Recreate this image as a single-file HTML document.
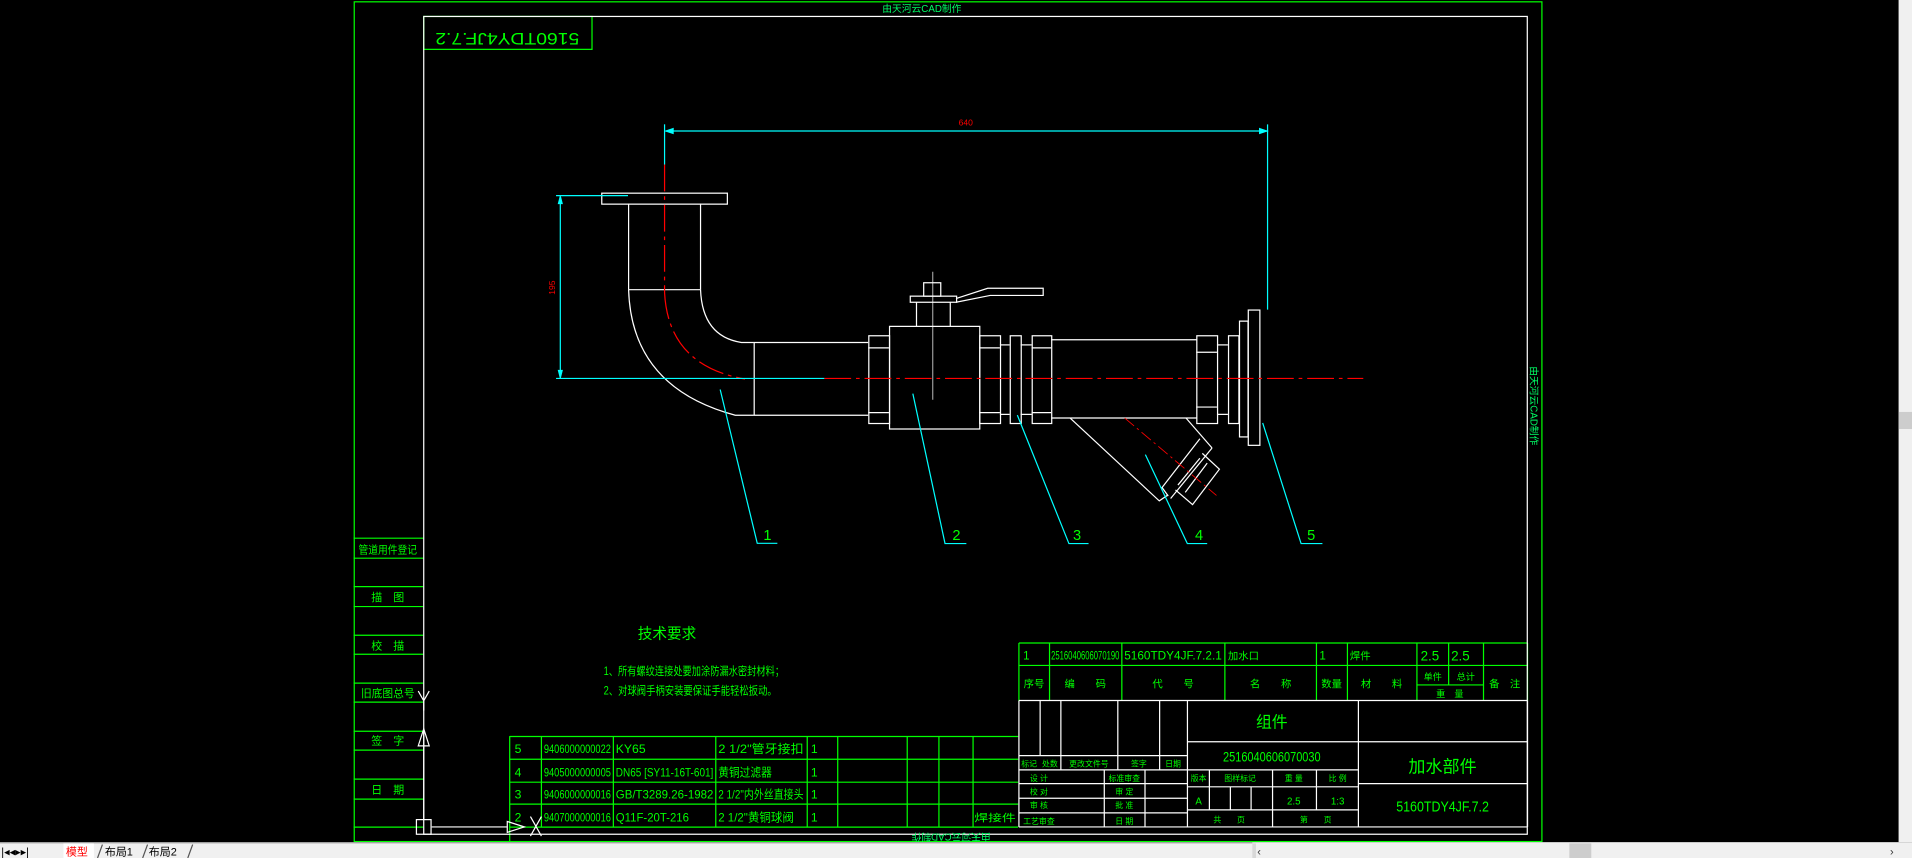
<!DOCTYPE html>
<html><head><meta charset="utf-8"><style>
html,body{margin:0;padding:0;background:#000;overflow:hidden}
svg{display:block}
text{font-family:"Liberation Sans","Noto Sans CJK SC",sans-serif}
</style></head><body>
<svg width="1912" height="858" viewBox="0 0 1568 704" preserveAspectRatio="none" xmlns="http://www.w3.org/2000/svg">
<rect width="1568" height="704" fill="#000"/>
<g fill="none" stroke="#00ff00" stroke-width="1">
<rect x="290.5" y="1.5" width="974" height="689"/>
<rect x="347.5" y="13.5" width="138" height="27"/>
<g>
<line x1="290" y1="441.6" x2="347" y2="441.6"/><line x1="290" y1="458" x2="347" y2="458"/>
<line x1="290" y1="481.3" x2="347" y2="481.3"/><line x1="290" y1="497.7" x2="347" y2="497.7"/>
<line x1="290" y1="521.2" x2="347" y2="521.2"/><line x1="290" y1="536.8" x2="347" y2="536.8"/>
<line x1="290" y1="560.5" x2="347" y2="560.5"/><line x1="290" y1="576.1" x2="347" y2="576.1"/>
<line x1="290" y1="600" x2="347" y2="600"/><line x1="290" y1="615.5" x2="347" y2="615.5"/>
<line x1="290" y1="639.3" x2="347" y2="639.3"/><line x1="290" y1="655.7" x2="347" y2="655.7"/>
<line x1="290" y1="678.7" x2="347" y2="678.7"/>
</g>
<line x1="418" y1="604.3" x2="835" y2="604.3"/><line x1="418" y1="623" x2="835" y2="623"/>
<line x1="418" y1="641.8" x2="835" y2="641.8"/><line x1="418" y1="659.8" x2="835" y2="659.8"/>
<line x1="418" y1="678.7" x2="835" y2="678.7"/>
<line x1="418" y1="604" x2="418" y2="690"/>
<line x1="444" y1="604" x2="444" y2="679"/><line x1="503" y1="604" x2="503" y2="679"/>
<line x1="587" y1="604" x2="587" y2="679"/><line x1="662" y1="604" x2="662" y2="679"/>
<line x1="687" y1="604" x2="687" y2="679"/><line x1="744" y1="604" x2="744" y2="679"/>
<line x1="770" y1="604" x2="770" y2="679"/><line x1="798" y1="604" x2="798" y2="679"/>
<line x1="835.6" y1="527.6" x2="1252.7" y2="527.6"/><line x1="835.6" y1="546" x2="1252.7" y2="546"/>
<line x1="1162" y1="562" x2="1216.6" y2="562"/>
<line x1="835.6" y1="527.6" x2="835.6" y2="575"/>
<line x1="860.7" y1="527.6" x2="860.7" y2="575"/><line x1="920" y1="527.6" x2="920" y2="575"/>
<line x1="1004.5" y1="527.6" x2="1004.5" y2="575"/><line x1="1079.6" y1="527.6" x2="1079.6" y2="575"/>
<line x1="1105" y1="527.6" x2="1105" y2="575"/><line x1="1162" y1="527.6" x2="1162" y2="575"/>
<line x1="1188" y1="527.6" x2="1188" y2="562"/><line x1="1216.6" y1="527.6" x2="1216.6" y2="575"/>
<line x1="1252.7" y1="527.6" x2="1252.7" y2="575"/>
</g>
<g fill="none" stroke="#fff" stroke-width="1">
<rect x="347.5" y="13.5" width="905" height="671"/>
<line x1="835.6" y1="574.8" x2="1252.7" y2="574.8"/>
<line x1="835.6" y1="678.5" x2="1252.7" y2="678.5"/>
<line x1="835.6" y1="574.8" x2="835.6" y2="678.5"/>
<line x1="853" y1="574.8" x2="853" y2="620"/><line x1="870" y1="574.8" x2="870" y2="631.7"/>
<line x1="916.7" y1="574.8" x2="916.7" y2="631.7"/><line x1="951" y1="574.8" x2="951" y2="631.7"/>
<line x1="835.6" y1="620" x2="973.8" y2="620"/><line x1="835.6" y1="631.7" x2="1114" y2="631.7"/>
<line x1="835.6" y1="655" x2="973.8" y2="655"/>
<line x1="835.6" y1="643" x2="973.8" y2="643"/><line x1="835.6" y1="667" x2="973.8" y2="667"/>
<line x1="905.6" y1="631.7" x2="905.6" y2="678.5"/><line x1="939" y1="631.7" x2="939" y2="678.5"/>
<line x1="973.8" y1="574.8" x2="973.8" y2="678.5"/>
<line x1="973.8" y1="608.6" x2="1252.7" y2="608.6"/>
<line x1="973.8" y1="645.6" x2="1114" y2="645.6"/><line x1="973.8" y1="664.5" x2="1114" y2="664.5"/>
<line x1="991.8" y1="631.7" x2="991.8" y2="664.5"/><line x1="1009" y1="645.6" x2="1009" y2="664.5"/>
<line x1="1026" y1="645.6" x2="1026" y2="664.5"/><line x1="1043.6" y1="631.7" x2="1043.6" y2="678.5"/>
<line x1="1079.6" y1="631.7" x2="1079.6" y2="664.5"/>
<line x1="1114" y1="574.8" x2="1114" y2="678.5"/>
<line x1="1114" y1="643" x2="1252.7" y2="643"/>
<line x1="1252.7" y1="574.8" x2="1252.7" y2="678.5"/>
<!-- drawing -->
<rect x="493.5" y="158.5" width="103" height="9"/>
<line x1="515.5" y1="167" x2="515.5" y2="237.7"/><line x1="574.5" y1="167" x2="574.5" y2="237.7"/>
<line x1="515.5" y1="237.7" x2="574.5" y2="237.7"/>
<path d="M515.5 237.7 Q518 318 603 340.7 L618 340.7"/>
<path d="M574.5 237.7 Q576 276 608 281 L618 281"/>
<line x1="618" y1="281" x2="712" y2="281"/><line x1="618" y1="340.7" x2="712" y2="340.7"/>
<line x1="618.5" y1="281" x2="618.5" y2="340.7"/>
<rect x="712.5" y="275.5" width="17" height="72"/>
<line x1="712" y1="285.4" x2="729" y2="285.4"/><line x1="712" y1="338.6" x2="729" y2="338.6"/>
<rect x="729.5" y="267.8" width="74" height="84.2"/>
<line x1="751.6" y1="248" x2="751.6" y2="267.8"/><line x1="779.3" y1="248" x2="779.3" y2="267.8"/>
<rect x="746.5" y="243" width="38" height="5"/>
<rect x="757.5" y="232" width="14" height="11"/>
<path d="M784 245 L810 236.5 H855.5 V242.4 H812 L784 248"/>
<line x1="765" y1="223" x2="765" y2="328" stroke-width="0.6"/>
<rect x="803.5" y="275.5" width="17" height="72"/>
<line x1="803" y1="285.4" x2="820" y2="285.4"/><line x1="803" y1="338.6" x2="820" y2="338.6"/>
<line x1="820" y1="283" x2="828" y2="283"/><line x1="820" y1="340" x2="828" y2="340"/>
<rect x="828.5" y="275.5" width="9" height="72"/>
<line x1="837" y1="283" x2="846" y2="283"/><line x1="837" y1="340" x2="846" y2="340"/>
<rect x="846.5" y="275.5" width="16" height="72"/>
<line x1="846" y1="285.4" x2="862" y2="285.4"/><line x1="846" y1="338.6" x2="862" y2="338.6"/>
<line x1="862" y1="278.8" x2="981.5" y2="278.8"/><line x1="862" y1="343" x2="981.5" y2="343"/>
<rect x="981.5" y="275.5" width="17" height="72"/>
<line x1="981" y1="289" x2="998" y2="289"/><line x1="981" y1="334" x2="998" y2="334"/>
<line x1="998" y1="283" x2="1007" y2="283"/><line x1="998" y1="340" x2="1007" y2="340"/>
<rect x="1007.5" y="275.5" width="8.5" height="72"/>
<rect x="1016.5" y="263.5" width="7" height="95"/>
<rect x="1023.7" y="254.4" width="9.5" height="111"/>
<path d="M877.6 343 L950.7 411 L958 406"/>
<path d="M972.6 343 L994 367.6"/>
<path d="M994 367.6 L960 409 M984 360 L953 400 L958 407 M986 372 L1000 385 L978 414 L964 402 M984 376 L966 398 M990 380 L972 404"/>
</g>
<g stroke="#ff0000" stroke-width="1" fill="none">
<line x1="545" y1="135" x2="545" y2="240" stroke-dasharray="22,4,3,4"/>
<path d="M545 240 Q548 300 611 311" stroke-dasharray="22,4,3,4"/>
<line x1="676" y1="310.5" x2="1118" y2="310.5" stroke-dasharray="22,4,3,4"/>
<line x1="922.4" y1="343" x2="997.6" y2="406.5" stroke-dasharray="10,3,2,3" stroke-width="0.7"/>
</g>
<g stroke="#00ffff" stroke-width="1" fill="none">
<line x1="545" y1="102" x2="545" y2="135"/>
<line x1="1039.5" y1="102" x2="1039.5" y2="254"/>
<line x1="546" y1="107.5" x2="1039" y2="107.5"/>
<path d="M546 107.5 l6 -2 v4 z M1039 107.5 l-6 -2 v4 z" fill="#00ffff"/>
<line x1="456" y1="160.5" x2="515" y2="160.5"/>
<line x1="456" y1="310.5" x2="676" y2="310.5"/>
<line x1="459.5" y1="161" x2="459.5" y2="310"/>
<path d="M459.5 161 l-1.5 6 h3 z M459.5 310 l-1.5 -6 h3 z" fill="#00ffff"/>
<path d="M590.6 319.6 L621 445.8 H637.5"/>
<path d="M748.6 323 L775 446 H792.5"/>
<path d="M834.3 340.6 L876.6 446 H892.7"/>
<path d="M939.3 373 L973.7 446 H990"/>
<path d="M1035.5 347 L1067 446 H1084.5"/>
</g>
<g fill="#00ff00" font-size="12">
<text x="626" y="443">1</text><text x="781" y="443">2</text><text x="880" y="443">3</text><text x="980" y="443">4</text><text x="1072" y="443">5</text>
</g>
<text x="792" y="103" fill="#ff0000" font-size="7" text-anchor="middle">640</text>
<text transform="translate(455,236) rotate(-90)" fill="#ff0000" font-size="7" text-anchor="middle">195</text>
<g stroke="#fff" fill="none" stroke-width="1">
<line x1="347.5" y1="600" x2="347.5" y2="672"/>
<line x1="354" y1="678.5" x2="416" y2="678.5"/>
<rect x="341.5" y="672.5" width="12" height="12"/>
<path d="M343 612 L347.5 598 L352 612 Z"/>
<path d="M416 674 L430 678.5 L416 683 Z"/>
<path d="M343 567 L347.5 575 L352 567 M347.5 575 V583"/>
<path d="M435 670 L444 686 M444 670 L435 686"/>
</g>
<g fill="#00ff00" font-size="9">
<text x="756" y="10" font-size="8" text-anchor="middle" fill="#00ff66">由天河云CAD制作</text>
<text transform="translate(416,27) scale(-1,-1)" font-size="14" text-anchor="middle" textLength="118" lengthAdjust="spacingAndGlyphs">5160TDY4JF.7.2</text>
<text transform="translate(1255,333) rotate(90)" font-size="8" text-anchor="middle" fill="#00ff66">由天河云CAD制作</text>
<text transform="translate(780,684) scale(-1,-1)" font-size="8" text-anchor="middle" fill="#00ff66">由天河云CAD制作</text>
<text x="318" y="454" text-anchor="middle" textLength="48" lengthAdjust="spacingAndGlyphs">管道用件登记</text>
<text x="318" y="493" text-anchor="middle">描　图</text>
<text x="318" y="533" text-anchor="middle">校　描</text>
<text x="318" y="572" text-anchor="middle" textLength="44" lengthAdjust="spacingAndGlyphs">旧底图总号</text>
<text x="318" y="611" text-anchor="middle">签　字</text>
<text x="318" y="651" text-anchor="middle">日　期</text>
<text x="547" y="524" font-size="12" text-anchor="middle">技术要求</text>
<text x="495" y="554" font-size="9.5" textLength="148" lengthAdjust="spacingAndGlyphs">1、所有螺纹连接处要加涂防漏水密封材料；</text>
<text x="495" y="570" font-size="9.5" textLength="142" lengthAdjust="spacingAndGlyphs">2、对球阀手柄安装要保证手能轻松扳动。</text>
<g font-size="10">
<text x="422" y="618">5</text><text x="446" y="618" textLength="55" lengthAdjust="spacingAndGlyphs">9406000000022</text><text x="505" y="618">KY65</text><text x="589" y="618" textLength="70" lengthAdjust="spacingAndGlyphs">2 1/2"管牙接扣</text><text x="665" y="618">1</text>
<text x="422" y="637">4</text><text x="446" y="637" textLength="55" lengthAdjust="spacingAndGlyphs">9405000000005</text><text x="505" y="637" textLength="80" lengthAdjust="spacingAndGlyphs">DN65 [SY11-16T-601]</text><text x="589" y="637" textLength="44" lengthAdjust="spacingAndGlyphs">黄铜过滤器</text><text x="665" y="637">1</text>
<text x="422" y="655">3</text><text x="446" y="655" textLength="55" lengthAdjust="spacingAndGlyphs">9406000000016</text><text x="505" y="655" textLength="80" lengthAdjust="spacingAndGlyphs">GB/T3289.26-1982</text><text x="589" y="655" textLength="70" lengthAdjust="spacingAndGlyphs">2 1/2"内外丝直接头</text><text x="665" y="655">1</text>
<text x="422" y="674">2</text><text x="446" y="674" textLength="55" lengthAdjust="spacingAndGlyphs">9407000000016</text><text x="505" y="674" textLength="60" lengthAdjust="spacingAndGlyphs">Q11F-20T-216</text><text x="589" y="674" textLength="62" lengthAdjust="spacingAndGlyphs">2 1/2"黄铜球阀</text><text x="665" y="674">1</text>
<text x="799" y="674" font-size="8.5" textLength="34" lengthAdjust="spacingAndGlyphs">焊接件</text>
</g>
<g font-size="9.5">
<text x="839" y="541">1</text><text x="862" y="541" textLength="56" lengthAdjust="spacingAndGlyphs">2516040606070190</text><text x="922" y="541" textLength="80" lengthAdjust="spacingAndGlyphs">5160TDY4JF.7.2.1</text><text x="1007" y="541" font-size="8.5">加水口</text><text x="1082" y="541">1</text><text x="1107" y="541" font-size="8.5">焊件</text><text x="1165" y="542" font-size="11">2.5</text><text x="1190" y="542" font-size="11">2.5</text>
</g>
<g font-size="8.5">
<text x="848" y="564" text-anchor="middle">序号</text><text x="890" y="564" text-anchor="middle">编　　码</text><text x="962" y="564" text-anchor="middle">代　　号</text><text x="1042" y="564" text-anchor="middle">名　　称</text><text x="1092" y="564" text-anchor="middle">数量</text><text x="1133" y="564" text-anchor="middle">材　　料</text><text x="1175" y="558" text-anchor="middle" font-size="7.5">单件</text><text x="1202" y="558" text-anchor="middle" font-size="7.5">总计</text><text x="1189" y="572" text-anchor="middle" font-size="7.5">重　量</text><text x="1234" y="564" text-anchor="middle">备　注</text>
</g>
<g font-size="6.5" text-anchor="middle">
<text x="844" y="629">标记</text><text x="861" y="629">处数</text><text x="893" y="629">更改文件号</text><text x="934" y="629">签字</text><text x="962" y="629">日期</text>
<text x="852" y="641">设 计</text><text x="922" y="641">标准审查</text>
<text x="852" y="652">校 对</text><text x="922" y="652">审 定</text>
<text x="852" y="663">审 核</text><text x="922" y="663">批 准</text>
<text x="852" y="676">工艺审查</text><text x="922" y="676">日 期</text>
<text x="983" y="641">版本</text><text x="1017" y="641">图样标记</text><text x="1061" y="641">重 量</text><text x="1097" y="641">比 例</text>
<text x="983" y="660" font-size="8">A</text><text x="1061" y="660" font-size="8">2.5</text><text x="1097" y="660" font-size="8">1:3</text>
<text x="1008" y="675">共　　页</text><text x="1079" y="675">第　　页</text>
</g>
<text x="1043" y="597" font-size="13" text-anchor="middle">组件</text>
<text x="1043" y="625" font-size="11" text-anchor="middle" textLength="80" lengthAdjust="spacingAndGlyphs">2516040606070030</text>
<text x="1183" y="634" font-size="14" text-anchor="middle">加水部件</text>
<text x="1183" y="666" font-size="12" text-anchor="middle" textLength="76" lengthAdjust="spacingAndGlyphs">5160TDY4JF.7.2</text>
</g>
<rect x="1557" y="0" width="11" height="691" fill="#f0f0f0"/>
<rect x="1557" y="338" width="11" height="14" fill="#cdcdcd"/>
<rect x="0" y="691" width="1568" height="13" fill="#f0f0f0"/>
<line x1="0" y1="691.5" x2="1027" y2="691.5" stroke="#a0a0a0"/>
<rect x="1027" y="692" width="3" height="12" fill="#d8d8d8"/>
<rect x="1287" y="692" width="18" height="12" fill="#cdcdcd"/>
<text x="1031" y="702" font-size="9" fill="#333">‹</text>
<text x="1550" y="702" font-size="9" fill="#333">›</text>
<g font-size="9" fill="#000">
<text x="1" y="702">|◂◂▸▸|</text>
<rect x="52" y="692" width="25" height="12" fill="#fff"/>
<text x="54" y="702" fill="#ff0000">模型</text>
<text x="86" y="702">布局1</text>
<text x="122" y="702">布局2</text>
<path d="M80 704 L84 693 M117 704 L121 693 M154 704 L158 693" stroke="#555" fill="none"/>
</g>
</svg>
</body></html>
